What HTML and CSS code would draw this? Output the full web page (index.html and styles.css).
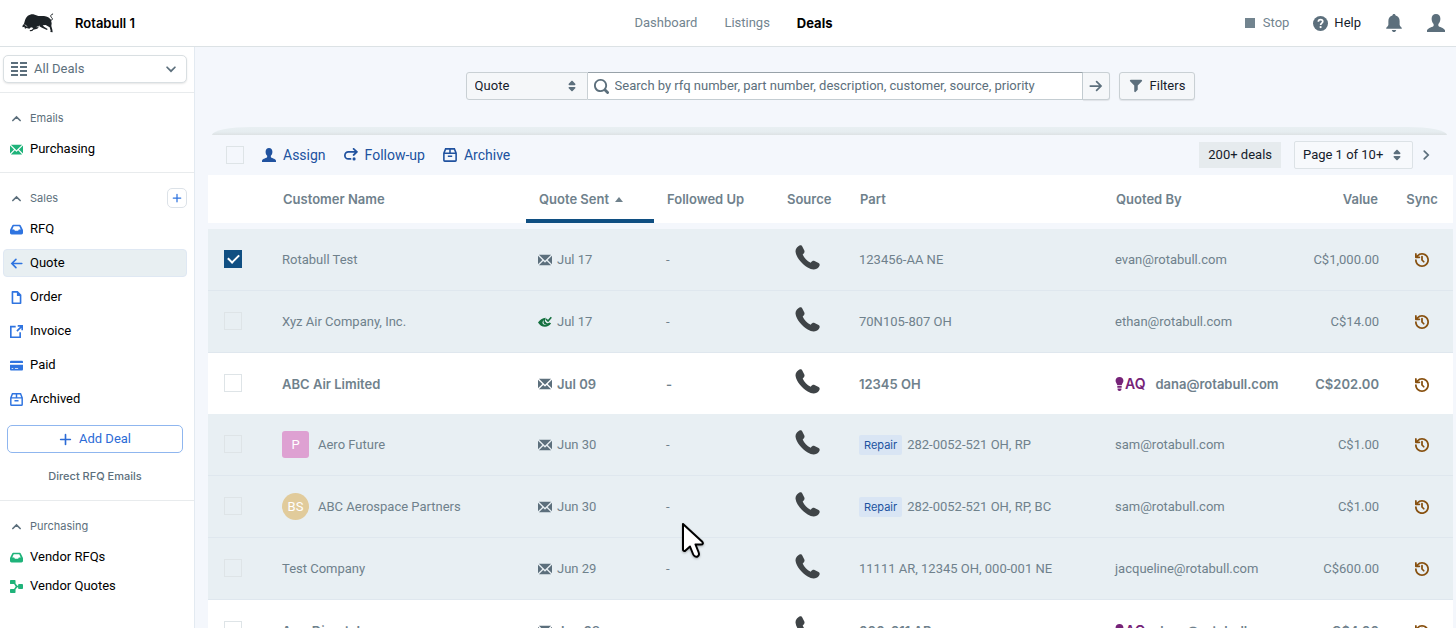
FILE: index.html
```html
<!DOCTYPE html>
<html lang="en">
<head>
    <meta charset="UTF-8">
    <meta name="viewport" content="width=device-width, initial-scale=1.0">
    <title>Rotabull - Deals</title>
    <link rel="stylesheet" href="styles.css">
</head>
<body>
    <!-- Icon sprite -->
    <svg class="sprite" aria-hidden="true">
        <symbol id="i-envelope" viewBox="0 0 16 16"><path d="M0 3.06v9.88L4.94 8 0 3.06zM14.94 2H1.06L8 8.94 14.94 2zm-6.41 8.53c-.14.14-.32.22-.53.22s-.39-.08-.53-.22L6 9.06 1.06 14h13.88L10 9.06l-1.47 1.47zM11.06 8L16 12.94V3.06L11.06 8z"/></symbol>
        <symbol id="i-seen" viewBox="0 0 16 16">
            <path d="M9 3C5 3 2 5.500 0 8.500C2 11.500 4.500 13.500 8 13.500C11 13.500 13.500 12 15 9.500L13 8.500C12 9.600 10.800 9.600 9.800 9L8.200 7.400C7.600 6.500 8 5 9 3ZM7 6C5.500 6.500 4.500 8.500 5.500 10C6.500 11.500 9 11.600 10 10.800C8 11 6.500 10 6.300 8.500C6.200 7.500 6.500 6.700 7 6Z" fill-rule="evenodd"/>
            <path d="M9 4.500L11.500 7L15.200 2.500" fill="none" stroke="currentColor" stroke-width="1.800"/>
        </symbol>
        <symbol id="i-carets" viewBox="0 0 16 16"><path d="M5 7h6a1.003 1.003 0 00.71-1.710l-3-3C8.530 2.110 8.280 2 8 2s-.53.11-.71.29l-3 3A1.003 1.003 0 005 7zm6 2H5a1.003 1.003 0 00-.71 1.710l3 3c.18.18.43.29.71.29s.53-.11.71-.29l3-3A1.003 1.003 0 0011 9z"/></symbol>
        <symbol id="i-filter" viewBox="0 0 16 16"><path d="M13.990.99h-12a1.003 1.003 0 00-.71 1.710l4.710 4.710V14a1.003 1.003 0 001.710.71l2-2c.18-.18.29-.43.29-.71V7.410L14.700 2.700a1.003 1.003 0 00-.71-1.710z"/></symbol>
        <symbol id="i-search" viewBox="0 0 16 16"><path d="M15.550 13.430l-2.670-2.680a6.940 6.940 0 001.110-3.760c0-3.870-3.130-7-7-7s-7 3.130-7 7 3.130 7 7 7c1.390 0 2.680-.42 3.760-1.110l2.680 2.670a1.498 1.498 0 102.120-2.120zm-8.560-1.440c-2.760 0-5-2.240-5-5s2.240-5 5-5 5 2.240 5 5-2.240 5-5 5z"/></symbol>
        <symbol id="i-history" viewBox="0 0 16 16"><path d="M8 3c-.55 0-1 .45-1 1v4c0 .28.11.53.29.71l2 2a1.003 1.003 0 001.420-1.420L9 7.590V4c0-.55-.45-1-1-1zm0-3a7.950 7.950 0 00-6 2.740V1c0-.55-.45-1-1-1S0 .45 0 1v4c0 .55.45 1 1 1h4c.55 0 1-.45 1-1s-.45-1-1-1H3.540C4.640 2.780 6.230 2 8 2c3.310 0 6 2.690 6 6 0 2.610-1.670 4.810-4 5.630-.63.23-1.300.37-2 .37-3.310 0-6-2.690-6-6 0-.55-.45-1-1-1s-1 .45-1 1c0 4.420 3.580 8 8 8s8-3.580 8-8-3.580-8-8-8z"/></symbol>
        <symbol id="i-user" viewBox="0 0 16 16"><path d="M8 0C10.400 0 11.900 1.700 11.900 4.200C11.900 6.200 11.200 7.900 10.100 8.900V10.400C10.300 11.700 15.200 12 16 14.500V16H0V14.500C.8 12 5.700 11.700 5.900 10.400V8.900C4.800 7.900 4.100 6.200 4.100 4.200C4.100 1.700 5.600 0 8 0Z"/></symbol>
        <symbol id="i-bell" viewBox="0 0 16 16"><path d="M8 0C8.800 0 9.400.6 9.400 1.400C11.800 2 13 3.900 13 6.300V9.500C13 11 15 11.500 15 12.600C15 13 14.700 13.200 14.300 13.200H1.700C1.300 13.200 1 13 1 12.600C1 11.500 3 11 3 9.500V6.300C3 3.900 4.200 2 6.600 1.400C6.600.6 7.200 0 8 0ZM6 14.200H10C9.700 15.300 9 16 8 16C7 16 6.300 15.300 6 14.200Z"/></symbol>
        <symbol id="i-help" viewBox="0 0 16 16">
            <circle cx="8" cy="8" r="8"/>
            <path d="M5.700 6.200C5.700 4.700 6.700 3.900 8.100 3.900C9.500 3.900 10.400 4.700 10.400 5.900C10.400 7.600 8.100 7.600 8.100 9.600" fill="none" stroke="#fff" stroke-width="1.800"/>
            <circle cx="8.100" cy="11.800" r="1.200" fill="#fff"/>
        </symbol>
        <symbol id="i-phone" viewBox="0 0 26 26"><path d="M3.500 1.200C5.200-.2 7 .3 7.700 1.700L9.700 5.800C10.300 7.200 9.700 8.300 8 9.900C9.500 13.600 12.500 16.700 16.300 18.400C17.900 16.700 18.900 16.100 20.300 16.700L24.500 18.600C26 19.400 26 21 24.900 22.600C22.700 25.800 18 26.500 13.200 23.400C6.800 19.400 1.300 12.800.6 7.300C.3 4.600 1.400 2.600 3.500 1.200Z"/></symbol>
        <symbol id="i-inbox" viewBox="0 0 16 16"><path d="M4.500 2H11.500C12.500 2 13 2.400 13.400 3.300L15.700 8C15.900 8.400 16 8.800 16 9.200V12C16 13.200 15.200 14 14 14H2C.8 14 0 13.200 0 12V9.200C0 8.800.1 8.400.3 8L2.600 3.300C3 2.400 3.500 2 4.500 2ZM4.600 4L2.800 8H4.500C5 8 5.300 8.200 5.500 8.600L6 9.500H10L10.500 8.600C10.700 8.200 11 8 11.500 8H13.200L11.400 4Z" fill-rule="evenodd"/></symbol>
        <symbol id="i-arrow-left" viewBox="0 0 16 16"><path d="M14.500 8H2.500M7.300 3L2.300 8L7.300 13" fill="none" stroke="currentColor" stroke-width="2" stroke-linecap="round"/></symbol>
        <symbol id="i-arrow-right" viewBox="0 0 16 16"><path d="M1.500 8H13.500M8.700 3L13.700 8L8.700 13" fill="none" stroke="currentColor" stroke-width="2" stroke-linecap="round"/></symbol>
        <symbol id="i-document" viewBox="0 0 16 16"><path d="M3 0H9.500L14 4.500V15C14 15.600 13.600 16 13 16H3C2.400 16 2 15.600 2 15V1C2 .4 2.400 0 3 0ZM4 2V14H12V6H8.500V2Z" fill-rule="evenodd"/></symbol>
        <symbol id="i-share" viewBox="0 0 16 16"><path d="M7 2H1V15H12.500V9M9.500 1H15V6.500M15 1L8.500 7.500" fill="none" stroke="currentColor" stroke-width="2"/></symbol>
        <symbol id="i-card" viewBox="0 0 16 16"><path d="M1.500 2H14.500C15.400 2 16 2.600 16 3.500V5H0V3.500C0 2.600.6 2 1.500 2ZM0 7H16V12.500C16 13.400 15.400 14 14.500 14H1.500C.6 14 0 13.400 0 12.500ZM2 11V12H4V11ZM6 11V12H10V11Z" fill-rule="evenodd"/></symbol>
        <symbol id="i-box" viewBox="0 0 16 16"><path d="M3 1H13L15 6V14C15 14.600 14.600 15 14 15H2C1.400 15 1 14.600 1 14V6ZM1 6H15M8 1V6M5.500 9.500H10.500" fill="none" stroke="currentColor" stroke-width="1.800"/></symbol>
        <symbol id="i-plus" viewBox="0 0 16 16"><path d="M8 2V14M2 8H14" fill="none" stroke="currentColor" stroke-width="2" stroke-linecap="round"/></symbol>
        <symbol id="i-flow" viewBox="0 0 16 16"><path d="M1 0H6C6.500 0 6.800.3 6.800.8V4.200L9 7H10V6C10 5.400 10.400 5 11 5H15C15.600 5 16 5.400 16 6V10C16 10.600 15.600 11 15 11H11C10.400 11 10 10.600 10 10V9H9L6.800 11.800V15.200C6.800 15.700 6.500 16 6 16H1C.4 16 0 15.700 0 15.200V11.800C0 11.300.4 11 1 11H5L7 8L5 5H1C.4 5 0 4.700 0 4.200V.8C0 .3.400 0 1 0Z"/></symbol>
        <symbol id="i-redo" viewBox="0 0 16 16"><path d="M14 4.500H5A4 4 0 0 0 5 12.500H7.500M11 1L14.700 4.500L11 8" fill="none" stroke="currentColor" stroke-width="2" stroke-linecap="round"/><circle cx="11.500" cy="12.500" r="1.800"/></symbol>
        <symbol id="i-chevron-up" viewBox="0 0 16 16"><path d="M3.500 10.500L8 6L12.500 10.500" fill="none" stroke="currentColor" stroke-width="2" stroke-linecap="round"/></symbol>
        <symbol id="i-chevron-down" viewBox="0 0 16 16"><path d="M3.500 6L8 10.500L12.500 6" fill="none" stroke="currentColor" stroke-width="2" stroke-linecap="round"/></symbol>
        <symbol id="i-chevron-right" viewBox="0 0 16 16"><path d="M6 3.500L10.500 8L6 12.500" fill="none" stroke="currentColor" stroke-width="2" stroke-linecap="round"/></symbol>
        <symbol id="i-list" viewBox="0 0 16 14"><path d="M0 1H7M9 1H16M0 5H7M9 5H16M0 9H7M9 9H16M0 13H7M9 13H16" fill="none" stroke="currentColor" stroke-width="1.800"/></symbol>
        <symbol id="i-bulb" viewBox="0 0 10 16"><path d="M5 0C7.700 0 9.500 1.900 9.500 4.300C9.500 6.600 7.800 7.500 7.500 9.500H2.500C2.200 7.500.5 6.600.5 4.300C.5 1.900 2.300 0 5 0ZM2.500 10.300H7.500V12.300H2.500ZM2.800 13H7.200V14C7.200 15 6.400 16 5 16C3.600 16 2.800 15 2.800 14Z"/></symbol>
    </svg>

    <!-- Top bar -->
    <header class="topbar">
        <div class="brand">
            <svg class="logo" viewBox="0 0 96 60" role="img" aria-label="Rotabull">
                <path d="M2 43L1 39L6 32L9 22C13 10 22 3 34 4L49 9L66 9C76 10 83 14 87 22L89 31L88 39L91 50L92 58L85 57L86 53L83 43L71 36L62 37L66 41L77 48L75 51L60 44L52 40L46 47L34 50L31 54L24 55L23 52L30 50L34 45L27 43L22 47L14 45L9 47L7 41Z"/>
                <path d="M85 21C91 24 94 17 88 13C84 9 87 4 92 3" fill="none" stroke="currentColor" stroke-width="3" stroke-linecap="round"/>
                <path d="M8 35L16 41M44 42L54 39" fill="none" stroke="#fff" stroke-width="2"/>
            </svg>
            <strong>Rotabull 1</strong>
        </div>
        <nav class="topnav">
            <a href="#dashboard">Dashboard</a>
            <a href="#listings">Listings</a>
            <a href="#deals" class="active">Deals</a>
        </nav>
        <div class="top-actions">
            <button class="plain stop"><span class="square"></span>Stop</button>
            <button class="plain help"><svg class="icon medium"><use href="#i-help"/></svg>Help</button>
            <button class="plain" aria-label="Notifications"><svg class="icon large"><use href="#i-bell"/></svg></button>
            <button class="plain" aria-label="Account"><svg class="icon large"><use href="#i-user"/></svg></button>
        </div>
    </header>

    <div class="page">
        <!-- Sidebar -->
        <aside class="sidebar">
            <div class="deal-scope">
                <button class="scope-button">
                    <svg class="icon wide"><use href="#i-list"/></svg>
                    <span>All Deals</span>
                    <svg class="icon"><use href="#i-chevron-down"/></svg>
                </button>
            </div>
            <section class="group">
                <h2><svg class="icon small"><use href="#i-chevron-up"/></svg>Emails</h2>
                <a href="#emails" class="item green"><svg class="icon small"><use href="#i-envelope"/></svg>Purchasing</a>
            </section>
            <section class="group sales">
                <h2>
                    <svg class="icon small"><use href="#i-chevron-up"/></svg>Sales
                    <button class="add-small" aria-label="Add sale"><svg class="icon tiny"><use href="#i-plus"/></svg></button>
                </h2>
                <a href="#rfq" class="item"><svg class="icon small"><use href="#i-inbox"/></svg>RFQ</a>
                <a href="#quote" class="item selected"><svg class="icon small"><use href="#i-arrow-left"/></svg>Quote</a>
                <a href="#order" class="item"><svg class="icon small"><use href="#i-document"/></svg>Order</a>
                <a href="#invoice" class="item"><svg class="icon small"><use href="#i-share"/></svg>Invoice</a>
                <a href="#paid" class="item"><svg class="icon small"><use href="#i-card"/></svg>Paid</a>
                <a href="#archived" class="item"><svg class="icon small"><use href="#i-box"/></svg>Archived</a>
                <button class="add-deal"><svg class="icon small"><use href="#i-plus"/></svg>Add Deal</button>
                <a href="#direct" class="direct">Direct RFQ Emails</a>
            </section>
            <section class="group compact">
                <h2><svg class="icon small"><use href="#i-chevron-up"/></svg>Purchasing</h2>
                <a href="#vendor-rfqs" class="item green"><svg class="icon small"><use href="#i-inbox"/></svg>Vendor RFQs</a>
                <a href="#vendor-quotes" class="item green"><svg class="icon small"><use href="#i-flow"/></svg>Vendor Quotes</a>
            </section>
        </aside>

        <!-- Deals list -->
        <main class="content">
            <form class="search-row">
                <div class="select-wrap kind">
                    <select aria-label="Deal type"><option>Quote</option></select>
                    <svg class="icon"><use href="#i-carets"/></svg>
                </div>
                <label class="search-box">
                    <svg class="icon medium"><use href="#i-search"/></svg>
                    <input type="text" aria-label="Search deals" placeholder="Search by rfq number, part number, description, customer, source, priority">
                </label>
                <button type="button" class="go" aria-label="Search"><svg class="icon"><use href="#i-arrow-right"/></svg></button>
                <button type="button" class="filters"><svg class="icon"><use href="#i-filter"/></svg>Filters</button>
            </form>

            <div class="edge"></div>
            <div class="toolbar">
                <input type="checkbox" class="check" aria-label="Select all">
                <button class="plain action"><svg class="icon"><use href="#i-user"/></svg>Assign</button>
                <button class="plain action"><svg class="icon"><use href="#i-redo"/></svg>Follow-up</button>
                <button class="plain action"><svg class="icon"><use href="#i-box"/></svg>Archive</button>
                <span class="count">200+ deals</span>
                <div class="select-wrap pager">
                    <select aria-label="Page"><option>Page 1 of 10+</option></select>
                    <svg class="icon"><use href="#i-carets"/></svg>
                </div>
                <button class="plain next" aria-label="Next page"><svg class="icon"><use href="#i-chevron-right"/></svg></button>
            </div>

            <table class="deals">
                <colgroup>
                    <col class="c-check"><col class="c-name"><col class="c-sent"><col class="c-followed"><col class="c-source">
                    <col class="c-part"><col class="c-by"><col class="c-value"><col class="c-sync">
                </colgroup>
                <thead>
                    <tr>
                        <th></th>
                        <th>Customer Name</th>
                        <th class="sorted">Quote Sent<span class="sort-arrow"></span></th>
                        <th>Followed Up</th>
                        <th>Source</th>
                        <th>Part</th>
                        <th>Quoted By</th>
                        <th class="right">Value</th>
                        <th class="center">Sync</th>
                    </tr>
                </thead>
                <tbody>
                    <tr>
                        <td class="check-cell"><input type="checkbox" class="check" aria-label="Select Rotabull Test" checked></td>
                        <td>Rotabull Test</td>
                        <td><span class="line"><svg class="icon"><use href="#i-envelope"/></svg>Jul 17</span></td>
                        <td>-</td>
                        <td class="source"><svg class="phone"><use href="#i-phone"/></svg></td>
                        <td>123456-AA NE</td>
                        <td>evan@rotabull.com</td>
                        <td class="right">C$1,000.00</td>
                        <td class="center"><svg class="icon sync"><use href="#i-history"/></svg></td>
                    </tr>
                    <tr>
                        <td class="check-cell"><input type="checkbox" class="check" aria-label="Select Xyz Air Company, Inc."></td>
                        <td>Xyz Air Company, Inc.</td>
                        <td><span class="line"><svg class="icon seen"><use href="#i-seen"/></svg>Jul 17</span></td>
                        <td>-</td>
                        <td class="source"><svg class="phone"><use href="#i-phone"/></svg></td>
                        <td>70N105-807 OH</td>
                        <td>ethan@rotabull.com</td>
                        <td class="right">C$14.00</td>
                        <td class="center"><svg class="icon sync"><use href="#i-history"/></svg></td>
                    </tr>
                    <tr class="unread">
                        <td class="check-cell"><input type="checkbox" class="check" aria-label="Select ABC Air Limited"></td>
                        <td>ABC Air Limited</td>
                        <td><span class="line"><svg class="icon"><use href="#i-envelope"/></svg>Jul 09</span></td>
                        <td>-</td>
                        <td class="source"><svg class="phone"><use href="#i-phone"/></svg></td>
                        <td>12345 OH</td>
                        <td><span class="line"><span class="aq"><svg class="bulb"><use href="#i-bulb"/></svg>AQ</span>dana@rotabull.com</span></td>
                        <td class="right">C$202.00</td>
                        <td class="center"><svg class="icon sync"><use href="#i-history"/></svg></td>
                    </tr>
                    <tr>
                        <td class="check-cell"><input type="checkbox" class="check" aria-label="Select Aero Future"></td>
                        <td><span class="who"><span class="avatar pink">P</span>Aero Future</span></td>
                        <td><span class="line"><svg class="icon"><use href="#i-envelope"/></svg>Jun 30</span></td>
                        <td>-</td>
                        <td class="source"><svg class="phone"><use href="#i-phone"/></svg></td>
                        <td><span class="line"><span class="tag">Repair</span>282-0052-521 OH, RP</span></td>
                        <td>sam@rotabull.com</td>
                        <td class="right">C$1.00</td>
                        <td class="center"><svg class="icon sync"><use href="#i-history"/></svg></td>
                    </tr>
                    <tr>
                        <td class="check-cell"><input type="checkbox" class="check" aria-label="Select ABC Aerospace Partners"></td>
                        <td><span class="who"><span class="avatar sand">BS</span>ABC Aerospace Partners</span></td>
                        <td><span class="line"><svg class="icon"><use href="#i-envelope"/></svg>Jun 30</span></td>
                        <td>-</td>
                        <td class="source"><svg class="phone"><use href="#i-phone"/></svg></td>
                        <td><span class="line"><span class="tag">Repair</span>282-0052-521 OH, RP, BC</span></td>
                        <td>sam@rotabull.com</td>
                        <td class="right">C$1.00</td>
                        <td class="center"><svg class="icon sync"><use href="#i-history"/></svg></td>
                    </tr>
                    <tr>
                        <td class="check-cell"><input type="checkbox" class="check" aria-label="Select Test Company"></td>
                        <td>Test Company</td>
                        <td><span class="line"><svg class="icon"><use href="#i-envelope"/></svg>Jun 29</span></td>
                        <td>-</td>
                        <td class="source"><svg class="phone"><use href="#i-phone"/></svg></td>
                        <td>11111 AR, 12345 OH, 000-001 NE</td>
                        <td>jacqueline@rotabull.com</td>
                        <td class="right">C$600.00</td>
                        <td class="center"><svg class="icon sync"><use href="#i-history"/></svg></td>
                    </tr>
                    <tr class="unread">
                        <td class="check-cell"><input type="checkbox" class="check" aria-label="Select AeroDirect, Inc."></td>
                        <td>AeroDirect, Inc.</td>
                        <td><span class="line"><svg class="icon"><use href="#i-envelope"/></svg>Jun 28</span></td>
                        <td>-</td>
                        <td class="source"><svg class="phone"><use href="#i-phone"/></svg></td>
                        <td>000-011 AR</td>
                        <td><span class="line"><span class="aq"><svg class="bulb"><use href="#i-bulb"/></svg>AQ</span>dana@rotabull.com</span></td>
                        <td class="right">C$4.00</td>
                        <td class="center"><svg class="icon sync"><use href="#i-history"/></svg></td>
                    </tr>
                </tbody>
            </table>
        </main>
    </div>

    <!-- Mouse pointer -->
    <svg class="pointer" viewBox="0 0 24 38" aria-hidden="true"><path d="M2 2V27.500C2 29 3.500 29.500 4.500 28.500L9 24.500L12 32C13 34.500 15 35.200 16.500 34.500C18 33.800 18.300 32 17.500 30L14.500 22.500H20C22 22.500 22.500 21 21 19.500Z"/></svg>
</body>
</html>
```

FILE: styles.css
```css
/* General Styles */
* {
    box-sizing: border-box;
}

html, body {
    height: 100%;
    margin: 0;
}

body {
    display: flex;
    flex-direction: column;
    overflow: hidden;
    font-family: Roboto, "Liberation Sans", sans-serif;
    font-size: 13px;
    line-height: 20px;
    color: #15202b;
    background: #f4f7fc;
}

/* Headings, labels and unread rows */
.brand, .topnav .active, .group h2, .direct, .deals th, .deals .unread td, .tag {
    font-family: Inter, "Liberation Sans", sans-serif;
}

a {
    color: inherit;
    text-decoration: none;
}

button, input, select {
    margin: 0;
    font: inherit;
    color: inherit;
}

button {
    display: flex;
    align-items: center;
    justify-content: center;
    padding: 0;
    cursor: pointer;
}

.plain {
    border: none;
    background: none;
}

/* Icons */
.sprite {
    display: none;
}

.icon {
    display: block;
    flex: none;
    width: 14px;
    height: 14px;
    fill: currentColor;
    color: #5c6f7c;
}

.icon.small {
    width: 13px;
    height: 13px;
}

.icon.medium {
    width: 15px;
    height: 15px;
}

.icon.tiny {
    width: 10px;
    height: 10px;
}

.icon.large {
    width: 18px;
    height: 18px;
}

.icon.wide {
    width: 16px;
}

/* Top Bar */
.topbar {
    display: grid;
    grid-template-columns: 1fr auto 1fr;
    align-items: center;
    flex: none;
    height: 47px;
    padding: 0 11px 0 22px;
    border-bottom: 1px solid #dce2e5;
    background: #fff;
}

.brand {
    display: flex;
    align-items: center;
    gap: 21px;
    color: #000;
}

.brand strong {
    font-weight: 600;
}

.logo {
    width: 32px;
    height: 20px;
    color: #1c2226;
    fill: currentColor;
}

.topnav {
    display: flex;
    gap: 27px;
    color: #72848f;
}

.topnav .active {
    color: #000;
    font-weight: 700;
}

.top-actions {
    display: flex;
    align-items: center;
    justify-content: flex-end;
    gap: 24px;
}

.stop {
    gap: 8px;
    color: #72848f;
}

.square {
    width: 10px;
    height: 10px;
    background: #72848f;
}

.help {
    gap: 6px;
}

/* Page */
.page {
    display: flex;
    flex: 1;
    min-height: 0;
}

/* Sidebar */
.sidebar {
    flex: none;
    width: 195px;
    border-right: 1px solid #e3eaf1;
    background: #fff;
}

.deal-scope {
    padding: 8px 7px 9px 3px;
    border-bottom: 1px solid #e8ebed;
}

.scope-button {
    gap: 7px;
    width: 100%;
    height: 28px;
    padding: 0 8px 0 7px;
    border: 1px solid #d9dfe2;
    border-radius: 5px;
    background: #fff;
    box-shadow: 0 1px 2px rgba(0, 0, 0, 0.1);
    color: #5c6f7c;
}

.scope-button span {
    flex: 1;
    text-align: left;
}

.group {
    padding: 15px 7px 9px 3px;
    border-bottom: 1px solid #e8ebed;
}

.group.compact {
    border-bottom: none;
}

.group h2 {
    display: flex;
    align-items: center;
    gap: 7px;
    height: 20px;
    margin: 0 0 7px;
    padding-left: 7px;
    font-size: 11px;
    font-weight: 400;
    color: #5c6f7c;
}

.add-small {
    width: 20px;
    height: 20px;
    margin-left: auto;
    border: 1px solid #dce2e8;
    border-radius: 5px;
    background: #fff;
}

.add-small .icon, .item .icon {
    color: #2f74e0;
}

.item {
    display: flex;
    align-items: center;
    gap: 7px;
    height: 28px;
    padding-left: 6px;
    border: 1px solid transparent;
    border-radius: 4px;
    color: #000;
}

.item + .item {
    margin-top: 6px;
}

.compact .item + .item {
    margin-top: 1px;
}

.item.green .icon {
    color: #1fb37a;
}

.item.selected {
    border-color: #dfe8f3;
    background: #e8eff2;
}

.sales {
    padding-bottom: 14px;
}

.add-deal {
    gap: 7px;
    width: calc(100% - 8px);
    height: 28px;
    margin: 12px 4px 0;
    border: 1px solid #8fb6ef;
    border-radius: 5px;
    background: #fff;
    color: #2c6bd6;
}

.add-deal .icon {
    color: inherit;
}

.direct {
    display: block;
    margin-top: 13px;
    font-size: 11px;
    font-weight: 500;
    text-align: center;
    color: #5c6f7c;
}

/* Content */
.content {
    flex: 1;
    min-width: 0;
    padding: 25px 3px 0 13px;
    overflow: hidden;
}

/* Search */
.search-row {
    display: flex;
    justify-content: center;
    height: 28px;
}

.select-wrap {
    display: grid;
    align-items: center;
}

.select-wrap select, .select-wrap .icon {
    grid-area: 1 / 1;
}

.select-wrap .icon {
    justify-self: end;
    margin-right: 9px;
    pointer-events: none;
}

.select-wrap select {
    appearance: none;
    width: 100%;
    height: 28px;
    padding: 0 8px;
    border: 1px solid #c9d0d4;
    border-radius: 3px 0 0 3px;
    background: #f5f7f9;
}

.kind {
    width: 122px;
}

.search-box {
    display: flex;
    align-items: center;
    gap: 6px;
    width: 495px;
    padding-left: 6px;
    border: 1px solid #c4cdd2;
    border-top-color: #98a2a9;
    border-left: none;
    background: #fff;
}

.search-box input {
    flex: 1;
    min-width: 0;
    padding: 0;
    border: none;
    outline: none;
    background: none;
}

.search-box input::placeholder {
    color: #5c6f7c;
    opacity: 1;
}

.go, .filters {
    border: 1px solid #c9d0d4;
    border-radius: 3px;
    background: #f5f7f9;
    box-shadow: 0 1px 1px rgba(0, 0, 0, 0.08);
}

.go {
    width: 27px;
    border-left: none;
    border-radius: 0 3px 3px 0;
}

.filters {
    gap: 7px;
    margin-left: 9px;
    padding: 0 9px;
}

/* Toolbar */
.edge {
    height: 8px;
    margin: 27px 6px 0 4px;
    border-radius: 40px 40px 0 0 / 8px 8px 0 0;
    background: linear-gradient(#e8eff2, #e6edf0 60%, #dde2e4);
}

.toolbar {
    display: flex;
    align-items: center;
    height: 40px;
    padding: 0 20px 0 18px;
}

.check {
    appearance: none;
    display: block;
    width: 18px;
    height: 18px;
    border: 1px solid #dee4e7;
    background: transparent;
}

.check:checked {
    border-color: #104f82;
    background: #104f82;
}

.check:checked::after {
    content: "";
    display: block;
    width: 9px;
    height: 5px;
    margin: 3px auto;
    border: solid #fff;
    border-width: 0 0 2px 2px;
    transform: rotate(-45deg);
}

.action {
    gap: 7px;
    margin-left: 18px;
    font-size: 14px;
    color: #20529f;
}

.action .icon {
    color: inherit;
}

.count {
    margin-left: auto;
    padding: 3px 9px;
    background: #e6ebee;
}

.pager {
    width: 119px;
    margin: 0 6px 0 13px;
}

.pager select {
    border-color: #dce2e6;
    border-radius: 2px;
    background: #f7f9fc;
}

/* Deals Table */
.deals {
    width: 100%;
    table-layout: fixed;
    border-spacing: 0;
    color: #6f818c;
}

.c-check { width: 62px; }
.c-name { width: 256px; }
.c-sent { width: 128px; }
.c-followed { width: 120px; }
.c-source { width: 73px; }
.c-part { width: 256px; }
.c-value { width: 101px; }
.c-sync { width: 62px; }

.deals th {
    height: 48px;
    padding: 4px 13px 0;
    border-bottom: 4px solid transparent;
    background: #fff;
    font-weight: 600;
    text-align: left;
    white-space: nowrap;
}

.deals th.sorted {
    border-bottom-color: #104f82;
}

.sort-arrow {
    display: inline-block;
    margin-left: 6px;
    border: 4px solid transparent;
    border-top: none;
    border-bottom: 5px solid #6f818c;
    vertical-align: 2px;
}

/* Gap between the header and the first row */
.deals tbody::before {
    content: "";
    display: block;
    height: 6px;
}

.deals td {
    height: 62px;
    padding: 0 12px;
    border-bottom: 1px solid #dfe7ee;
    background: #e8eff3;
    white-space: nowrap;
}

.deals .unread td {
    height: 61px;
    border-bottom: none;
    background: #fff;
    font-weight: 600;
}

.deals .right {
    text-align: right;
}

.deals .center {
    text-align: center;
}

.deals th.center {
    padding: 4px 0 0;
}

.deals .check-cell {
    padding: 0 16px 2px;
}

.deals .source {
    padding-left: 21px;
}

.line, .who {
    display: flex;
    align-items: center;
    gap: 5px;
}

.who {
    gap: 9px;
}

.icon.seen {
    color: #14703f;
}

.icon.sync {
    display: inline-block;
    color: #87500f;
    vertical-align: middle;
}

.phone {
    display: block;
    width: 25px;
    height: 25px;
    margin-bottom: 4px;
    fill: #3f4447;
}

.aq {
    display: flex;
    align-items: center;
    gap: 1px;
    margin-right: 5px;
    font-size: 14px;
    color: #762378;
}

.bulb {
    width: 9px;
    height: 14px;
    fill: currentColor;
}

.avatar {
    display: flex;
    align-items: center;
    justify-content: center;
    width: 27px;
    height: 27px;
    border-radius: 3px;
    color: #fff;
}

.avatar.pink {
    background: #dea1d2;
}

.avatar.sand {
    border-radius: 50%;
    background: #e1cb9b;
}

.tag {
    padding: 0 5px;
    border-radius: 2px;
    background: #d9e5f4;
    font-size: 11px;
    color: #20529f;
}

/* Mouse Pointer */
.pointer {
    position: absolute;
    top: 522px;
    left: 681px;
    width: 24px;
    height: 38px;
    fill: #fff;
    stroke: #000;
    stroke-width: 2;
    stroke-linejoin: round;
    filter: drop-shadow(0 1px 1px rgba(0, 0, 0, 0.3));
}
```
